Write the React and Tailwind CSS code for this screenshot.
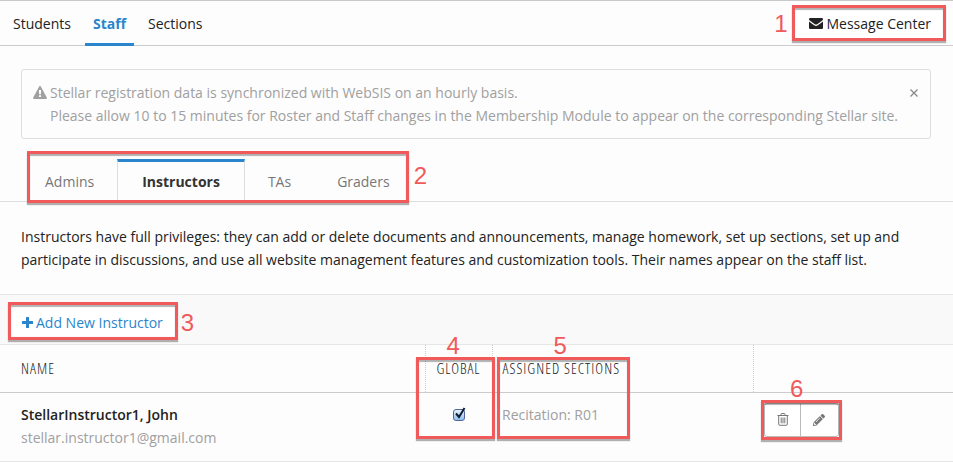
import { FaPencilAlt } from 'react-icons/fa'
import clsx from 'clsx'

const sections = ['Students', 'Staff', 'Sections']
const roles = ['Admins', 'Instructors', 'TAs', 'Graders']

const instructors = [
  {
    name: 'StellarInstructor1, John',
    email: 'stellar.instructor1@gmail.com',
    global: true,
    assigned: 'Recitation: R01',
  },
]

// Numbered callout, laid over the element that it points at
function Callout({ number, className, labelClassName }) {
  return (
    <div
      className={clsx(
        'pointer-events-none absolute z-10 border-3 border-[#f05a5a] shadow-[0_2px_1px_rgba(0,0,0,0.3),inset_0_2px_1px_rgba(0,0,0,0.3)]',
        className
      )}
    >
      <span
        className={clsx(
          "absolute font-['Liberation_Sans',sans-serif] text-2xl leading-6 font-normal tracking-normal text-[#f05a5a]",
          labelClassName
        )}
      >
        {number}
      </span>
    </div>
  )
}

function WarningIcon() {
  return (
    <svg viewBox="0 0 14 13" className="mt-[5px] h-[13px] w-3.5 shrink-0" fill="currentColor" aria-hidden="true">
      <path
        fillRule="evenodd"
        d="M6.2.5a.95.95 0 0 1 1.6 0l6 11a1 1 0 0 1-.9 1.500H1.100a1 1 0 0 1-.9-1.500zM5.900 4l.2 4.200h1.800L8.100 4zM6 9.300v1.800h2V9.300z"
      />
    </svg>
  )
}

function EnvelopeIcon() {
  return (
    <svg viewBox="0 0 14 11" className="mt-px h-[11px] w-3.5 shrink-0" fill="currentColor" aria-hidden="true">
      <path d="M0 1.200Q0 0 1.200 0h11.600Q14 0 14 1.200q0 .9-1 1.600L8.200 6.200Q7 7 5.800 6.200L1 2.800Q0 2.100 0 1.200zM0 3.500q3 2.300 5.200 3.800Q7 8.500 8.800 7.300 11 5.800 14 3.500v6.300Q14 11 12.800 11H1.200Q0 11 0 9.800z" />
    </svg>
  )
}

function PlusIcon() {
  return (
    <svg viewBox="0 0 11 11" className="size-[11px] shrink-0" fill="currentColor" aria-hidden="true">
      <path d="M4.500 0h2q.5 0 .5.500V4h3.500q.5 0 .5.500v2q0 .5-.5.500H7v3.500q0 .5-.5.500h-2q-.5 0-.5-.5V7H.5Q0 7 0 6.500v-2Q0 4 .5 4H4V.5Q4 0 4.500 0z" />
    </svg>
  )
}

function TrashIcon() {
  return (
    <svg viewBox="0 0 12 13" className="h-[13px] w-3" fill="none" stroke="currentColor" aria-hidden="true">
      <path d="M.5 2.500h11M4 2.500V1.300Q4 .5 4.800.5h2.400Q8 .5 8 1.300v1.200M1.700 2.500v8.600q0 1.200 1.200 1.200h6.200q1.200 0 1.200-1.200V2.500M4.200 4.500v5.800M6 4.500v5.800M7.800 4.500v5.800" />
    </svg>
  )
}

export default function App() {
  return (
    <div className="border-t border-[#c8c8c8] bg-[#fdfdfd] font-['Open_Sans','Noto_Sans',sans-serif] text-sm leading-[23px] text-[#222]">
      <header className="flex h-[45px] items-stretch justify-between border-b border-[#ccc] pr-2 pl-[5px]">
        <nav className="flex gap-1.5">
          {sections.map((section) => (
            <a
              key={section}
              href="#"
              className={clsx(
                '-mb-px flex items-center border-b-3 px-2 pt-0.5',
                section === 'Staff' ? 'border-[#2a85cc] font-bold text-[#2a85cc]' : 'border-transparent'
              )}
            >
              {section}
            </a>
          ))}
        </nav>
        <a href="#" className="relative my-1 flex items-center gap-[3px] bg-white px-3.5">
          <EnvelopeIcon />
          Message Center
          <Callout number="1" className="-right-px -left-[3px] inset-y-0" labelClassName="top-1 right-full mr-2" />
        </a>
      </header>

      <main>
        <div className="mr-[22px] ml-[21px] mt-[23px] flex items-start gap-[3px] rounded-[3px] border border-[#ddd] px-[11px] py-[11px] text-[#a0a0a0]" role="status">
          <WarningIcon />
          <p className="flex-1">
            Stellar registration data is synchronized with WebSIS on an hourly basis.
            <br />
            Please allow 10 to 15 minutes for Roster and Staff changes in the Membership Module to appear on the
            corresponding Stellar site.
          </p>
          <button type="button" aria-label="Close" className="-ml-5 p-0 text-[#888]">
            <svg viewBox="0 0 10 10" className="mt-[7px] size-2.5" stroke="currentColor" strokeWidth="1.300">
              <path d="M1.500 1.500l7 7M8.500 1.500l-7 7" />
            </svg>
          </button>
        </div>

        <div className="mt-5 flex border-b border-[#ddd] px-[22px]">
          <div className="relative flex">
            {roles.map((role) => (
              <button
                key={role}
                type="button"
                className={clsx(
                  'h-[42px] border-t-3',
                  role === 'Instructors'
                    ? 'border-x border-x-[#ddd] border-t-[#2a85cc] px-6 font-bold text-[#333]'
                    : 'border-transparent px-[23px] text-[#777]'
                )}
              >
                {role}
              </button>
            ))}
            <Callout number="2" className="-top-2 right-1 -bottom-0.5 left-[5px]" labelClassName="top-2.5 left-full ml-2" />
          </div>
        </div>

        <p className="mx-[21px] mt-[23px] mb-[23px]">
          Instructors have full privileges: they can add or delete documents and announcements, manage homework, set up
          sections, set up and participate in discussions, and use all website management features and customization
          tools. Their names appear on the staff list.
        </p>

        <div className="flex border-y border-[#e6e6e6] bg-[#f9f9f9] px-2 py-2">
          <button type="button" className="relative flex h-[33px] items-center gap-[3px] bg-white px-3.5 pt-1.5 text-[#2a85cc]">
            <PlusIcon />
            Add New Instructor
            <Callout number="3" className="-top-px -right-px -bottom-1 left-0" labelClassName="top-1.5 left-full ml-1.5" />
          </button>
        </div>

        <table className="w-full table-fixed border-collapse text-left">
          <colgroup>
            <col />
            <col className="w-[67px]" />
            <col className="w-[261px]" />
            <col className="w-[200px]" />
          </colgroup>
          <thead className="font-['Open_Sans_Condensed_Light','Open_Sans_Light_Condensed','Liberation_Sans_Narrow',sans-serif] text-[15px] tracking-[1px] text-[#222]">
            <tr className="h-[47px] border-b border-[#ccc]">
              <th className="pl-[21px] font-light">NAME</th>
              <th className="relative border-l border-dotted border-[#ccc] text-center font-light">
                GLOBAL
                <Callout number="4" className="top-3 -left-2.5 h-[82px] w-[79px]" labelClassName="bottom-full left-7 mb-0.5" />
              </th>
              <th className="relative border-l border-dotted border-[#ccc] pl-2.5 font-light">
                ASSIGNED SECTIONS
                <Callout number="5" className="top-3 left-1 h-[82px] w-[133px]" labelClassName="bottom-full left-[54px] mb-0.5" />
              </th>
              <th className="border-l border-dotted border-[#ccc]" aria-label="Actions" />
            </tr>
          </thead>
          <tbody>
            {instructors.map((person) => (
              <tr key={person.email} className="border-b border-[#e6e6e6] align-top">
                <td className="pt-2.5 pb-3 pl-[21px]">
                  <div className="font-semibold">{person.name}</div>
                  <div className="text-[#a0a0a0]">{person.email}</div>
                </td>
                <td className="pt-2.5 pb-3">
                  <div className="relative mx-auto mt-1.5 size-3">
                    <input
                      type="checkbox"
                      aria-label={`Global access for ${person.name}`}
                      defaultChecked={person.global}
                      className="peer block size-3 appearance-none rounded-[3px] border border-[#55659b] bg-linear-to-b from-[#e4f0fc] to-[#8fc0ee]"
                    />
                    <svg
                      viewBox="0 0 12 12"
                      className="pointer-events-none absolute -top-0.5 left-px hidden size-3 peer-checked:block"
                      fill="none"
                      stroke="#101c30"
                      strokeWidth="2"
                      aria-hidden="true"
                    >
                      <path d="M2 6.500l3 3.500L10.500 1" />
                    </svg>
                  </div>
                </td>
                <td className="pt-2.5 pb-3 pl-2.5 text-[#a0a0a0]">{person.assigned}</td>
                <td className="pt-2.5 pb-2 pl-[11px]">
                  <div className="relative flex h-[34px] w-[75px] rounded-[3px] border border-[#bbb] bg-white text-[#777]">
                    <button type="button" aria-label="Delete" className="flex w-9 items-center justify-center border-r border-[#bbb]">
                      <TrashIcon />
                    </button>
                    <button type="button" aria-label="Edit" className="flex w-9 items-center justify-center">
                      <FaPencilAlt className="size-3" />
                    </button>
                    <Callout number="6" className="-inset-1" labelClassName="bottom-full left-[26px] mb-0.5" />
                  </div>
                </td>
              </tr>
            ))}
          </tbody>
        </table>
      </main>
    </div>
  )
}
